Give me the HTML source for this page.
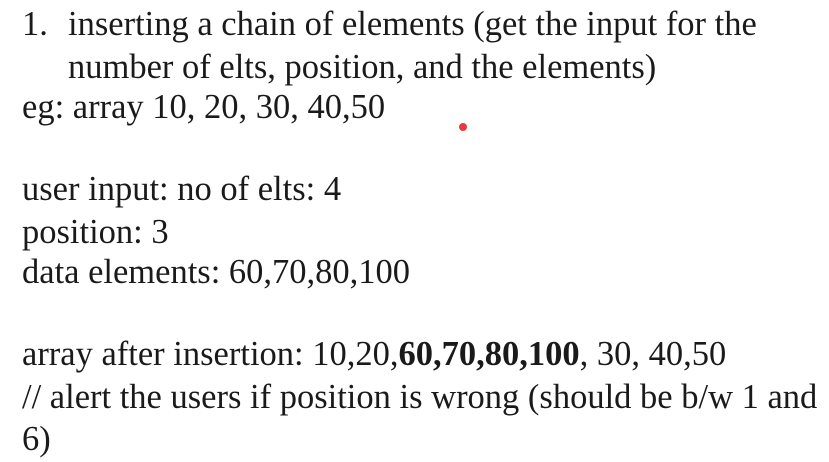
<!DOCTYPE html>
<html><head><meta charset="utf-8"><style>
body{margin:0;width:829px;height:462px;background:#fff;overflow:hidden;position:relative;font-family:"Liberation Serif",serif;color:#1a1a1a;}
.l{position:absolute;font-size:34.5px;line-height:34px;white-space:nowrap;}
.dot{position:absolute;left:459px;top:123px;width:8px;height:8px;border-radius:50%;background:#e8393f;}
</style></head><body>
<div class="l" style="left:22px;top:7px">1.</div>
<div class="l" style="left:68px;top:7px">inserting a chain of elements (get the input for the</div>
<div class="l" style="left:68px;top:50px">number of elts, position, and the elements)</div>
<div class="l" style="left:22px;top:90px">eg: array 10, 20, 30, 40,50</div>
<div class="dot"></div>
<div class="l" style="left:22px;top:172px">user input: no of elts: 4</div>
<div class="l" style="left:22px;top:215px">position: 3</div>
<div class="l" style="left:22px;top:255px">data elements: 60,70,80,100</div>
<div class="l" style="left:22px;top:337px">array after insertion: 10,20,<b>60,70,80,100</b>, 30, 40,50</div>
<div class="l" style="left:22px;top:380px">// alert the users if position is wrong (should be b/w 1 and</div>
<div class="l" style="left:22px;top:422px">6)</div>
</body></html>
